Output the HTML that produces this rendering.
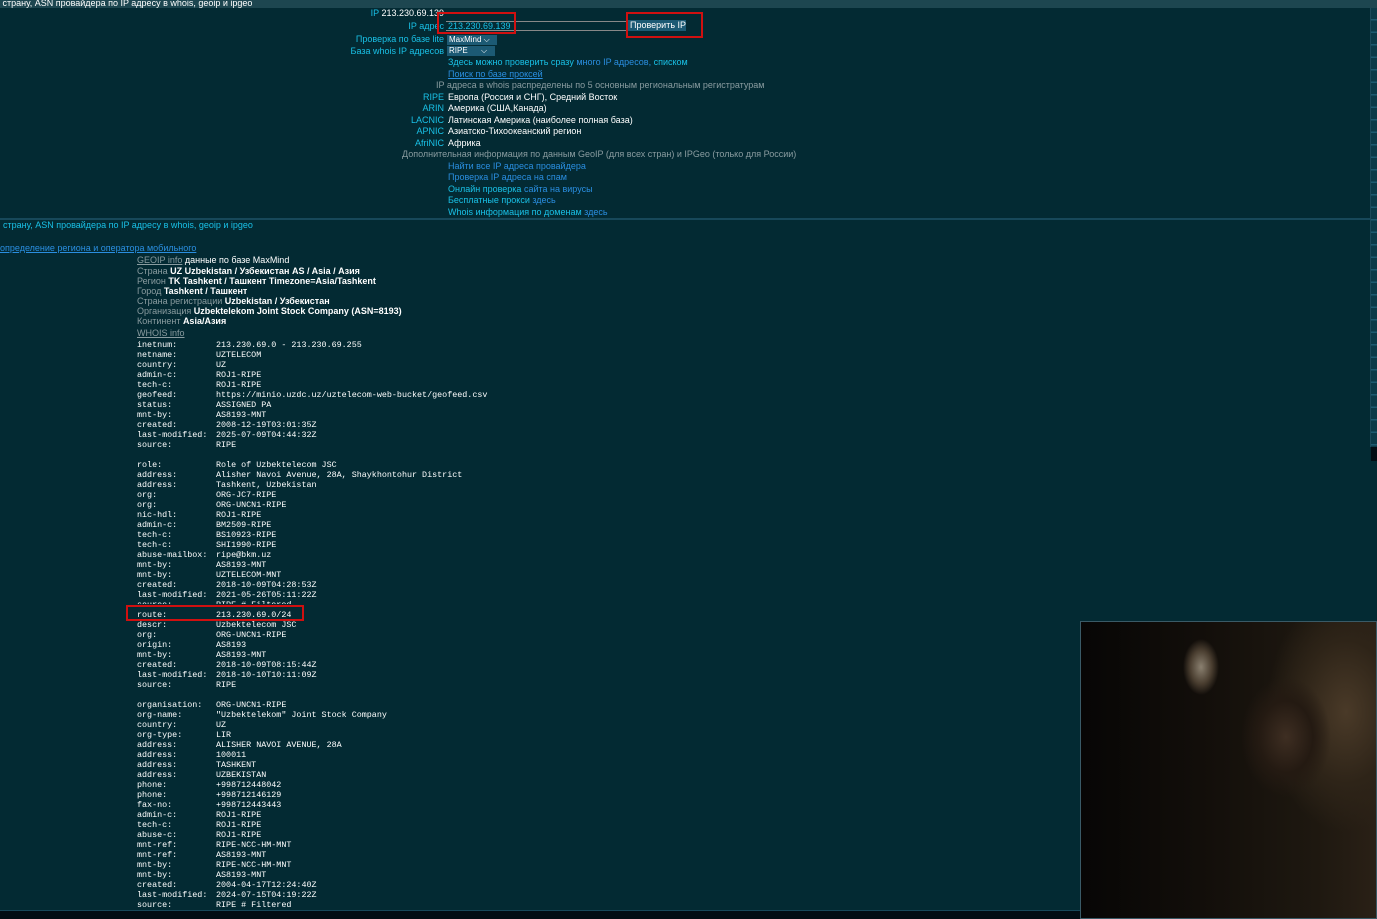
<!DOCTYPE html>
<html><head><meta charset="utf-8">
<style>
*{margin:0;padding:0;box-sizing:border-box}
html,body{width:1377px;height:919px;overflow:hidden;background:#032a33;font-family:"Liberation Sans",Arial,sans-serif;font-size:9px;color:#fff}
.a{position:absolute;white-space:nowrap;line-height:11px}
.r{text-align:right}
.c{color:#19c0e6}
.b{color:#2a8ee0}
.g{color:#8a9ca0}
.w{color:#fff}
u{text-decoration:underline}
.mono{position:absolute;left:137px;font-family:"Liberation Mono","DejaVu Sans Mono",monospace;font-size:8.4px;color:#fff;line-height:10px;white-space:nowrap}
.mono div{height:10px;white-space:pre}
.mono span{display:inline-block;width:79px}
.red{position:absolute;border:2px solid #d01010}
</style></head><body>
<div class="a" style="left:0;top:0;width:1377px;height:8px;background:#1d4650;line-height:6px;color:#fff;font-size:9px;overflow:hidden">&nbsp;страну, ASN провайдера по IP адресу в whois, geoip и ipgeo</div>

<div class="a c r" style="left:300px;width:144px;top:8px">IP <span class="w">213.230.69.139</span></div>
<div class="a c r" style="left:300px;width:144px;top:21px">IP адрес</div>
<div class="a" style="left:446px;top:21px;width:180px;height:10px;border-top:1px solid #888;border-bottom:1px solid #888;color:#19c0e6;line-height:9px;padding-left:2px">213.230.69.139</div>
<div class="a" style="left:628px;top:20px;width:58px;height:11px;background:#1c5a74;color:#fff;line-height:11px;padding-left:2px">Проверить IP</div>
<div class="red" style="left:437px;top:12px;width:79px;height:22px"></div>
<div class="red" style="left:626px;top:12px;width:77px;height:26px"></div>

<div class="a c r" style="left:300px;width:144px;top:34px">Проверка по базе lite</div>
<div class="a" style="left:447px;top:35px;width:50px;height:10px;background:#1c5a74;line-height:10px;padding-left:2px;font-size:8px">MaxMind ⌵</div>
<div class="a c r" style="left:300px;width:144px;top:46px">База whois IP адресов</div>
<div class="a" style="left:447px;top:46px;width:48px;height:10px;background:#1c5a74;line-height:10px;padding-left:2px;font-size:8px">RIPE &nbsp;&nbsp;&nbsp;&nbsp;&nbsp;⌵</div>

<div class="a b" style="left:448px;top:57px"><span class="c">Здесь можно проверить сразу</span> много IP адресов, <span class="c">списком</span></div>
<div class="a b" style="left:448px;top:69px"><u>Поиск по базе проксей</u></div>
<div class="a g" style="left:436px;top:80px">IP адреса в whois распределены по 5 основным региональным регистратурам</div>
<div class="a c r" style="left:300px;width:144px;top:92px">RIPE</div><div class="a w" style="left:448px;top:92px">Европа (Россия и СНГ), Средний Восток</div>
<div class="a c r" style="left:300px;width:144px;top:103px">ARIN</div><div class="a w" style="left:448px;top:103px">Америка (США,Канада)</div>
<div class="a c r" style="left:300px;width:144px;top:115px">LACNIC</div><div class="a w" style="left:448px;top:115px">Латинская Америка (наиболее полная база)</div>
<div class="a c r" style="left:300px;width:144px;top:126px">APNIC</div><div class="a w" style="left:448px;top:126px">Азиатско-Тихоокеанский регион</div>
<div class="a c r" style="left:300px;width:144px;top:138px">AfriNIC</div><div class="a w" style="left:448px;top:138px">Африка</div>
<div class="a g" style="left:402px;top:149px">Дополнительная информация по данным GeoIP (для всех стран) и IPGeo (только для России)</div>
<div class="a b" style="left:448px;top:161px">Найти все IP адреса провайдера</div>
<div class="a b" style="left:448px;top:172px">Проверка IP адреса на спам</div>
<div class="a b" style="left:448px;top:184px"><span class="c">Онлайн проверка</span> сайта на вирусы</div>
<div class="a b" style="left:448px;top:195px"><span class="c">Бесплатные прокси</span> здесь</div>
<div class="a b" style="left:448px;top:207px"><span class="c">Whois информация по доменам</span> здесь</div>

<div class="a" style="left:0;top:218px;width:1371px;height:2px;background:#17485a"></div>
<div class="a c" style="left:3px;top:220px">страну, ASN провайдера по IP адресу в whois, geoip и ipgeo</div>
<div class="a b" style="left:0;top:243px"><u>определение региона и оператора мобильного</u></div>

<div class="a g" style="left:137px;top:255px"><u>GEOIP info</u> <span class="w">данные по базе MaxMind</span></div>
<div class="a g" style="left:137px;top:266px">Страна <b class="w">UZ Uzbekistan / Узбекистан AS / Asia / Азия</b></div>
<div class="a g" style="left:137px;top:276px">Регион <b class="w">TK Tashkent / Ташкент Timezone=Asia/Tashkent</b></div>
<div class="a g" style="left:137px;top:286px">Город <b class="w">Tashkent / Ташкент</b></div>
<div class="a g" style="left:137px;top:296px">Страна регистрации <b class="w">Uzbekistan / Узбекистан</b></div>
<div class="a g" style="left:137px;top:306px">Организация <b class="w">Uzbektelekom Joint Stock Company (ASN=8193)</b></div>
<div class="a g" style="left:137px;top:316px">Континент <b class="w">Asia/Азия</b></div>
<div class="a g" style="left:137px;top:328px"><u>WHOIS info</u></div>

<div class="mono" style="top:340px"><div><span>inetnum:</span>213.230.69.0 - 213.230.69.255</div><div><span>netname:</span>UZTELECOM</div><div><span>country:</span>UZ</div><div><span>admin-c:</span>ROJ1-RIPE</div><div><span>tech-c:</span>ROJ1-RIPE</div><div><span>geofeed:</span>https://minio.uzdc.uz/uztelecom-web-bucket/geofeed.csv</div><div><span>status:</span>ASSIGNED PA</div><div><span>mnt-by:</span>AS8193-MNT</div><div><span>created:</span>2008-12-19T03:01:35Z</div><div><span>last-modified:</span>2025-07-09T04:44:32Z</div><div><span>source:</span>RIPE</div><div></div><div><span>role:</span>Role of Uzbektelecom JSC</div><div><span>address:</span>Alisher Navoi Avenue, 28A, Shaykhontohur District</div><div><span>address:</span>Tashkent, Uzbekistan</div><div><span>org:</span>ORG-JC7-RIPE</div><div><span>org:</span>ORG-UNCN1-RIPE</div><div><span>nic-hdl:</span>ROJ1-RIPE</div><div><span>admin-c:</span>BM2509-RIPE</div><div><span>tech-c:</span>BS10923-RIPE</div><div><span>tech-c:</span>SHI1990-RIPE</div><div><span>abuse-mailbox:</span>ripe@bkm.uz</div><div><span>mnt-by:</span>AS8193-MNT</div><div><span>mnt-by:</span>UZTELECOM-MNT</div><div><span>created:</span>2018-10-09T04:28:53Z</div><div><span>last-modified:</span>2021-05-26T05:11:22Z</div><div><span>source:</span>RIPE # Filtered</div><div><span>route:</span>213.230.69.0/24</div><div><span>descr:</span>Uzbektelecom JSC</div><div><span>org:</span>ORG-UNCN1-RIPE</div><div><span>origin:</span>AS8193</div><div><span>mnt-by:</span>AS8193-MNT</div><div><span>created:</span>2018-10-09T08:15:44Z</div><div><span>last-modified:</span>2018-10-10T10:11:09Z</div><div><span>source:</span>RIPE</div><div></div><div><span>organisation:</span>ORG-UNCN1-RIPE</div><div><span>org-name:</span>"Uzbektelekom" Joint Stock Company</div><div><span>country:</span>UZ</div><div><span>org-type:</span>LIR</div><div><span>address:</span>ALISHER NAVOI AVENUE, 28A</div><div><span>address:</span>100011</div><div><span>address:</span>TASHKENT</div><div><span>address:</span>UZBEKISTAN</div><div><span>phone:</span>+998712448042</div><div><span>phone:</span>+998712146129</div><div><span>fax-no:</span>+998712443443</div><div><span>admin-c:</span>ROJ1-RIPE</div><div><span>tech-c:</span>ROJ1-RIPE</div><div><span>abuse-c:</span>ROJ1-RIPE</div><div><span>mnt-ref:</span>RIPE-NCC-HM-MNT</div><div><span>mnt-ref:</span>AS8193-MNT</div><div><span>mnt-by:</span>RIPE-NCC-HM-MNT</div><div><span>mnt-by:</span>AS8193-MNT</div><div><span>created:</span>2004-04-17T12:24:40Z</div><div><span>last-modified:</span>2024-07-15T04:19:22Z</div><div><span>source:</span>RIPE # Filtered</div></div>
<div class="a" style="left:126px;top:604px;width:180px;height:5px;background:#032a33"></div>
<div class="red" style="left:126px;top:605px;width:178px;height:16px"></div>

<div class="a" style="left:0;top:910px;width:1377px;height:1px;background:#17485a"></div>
<div class="a" style="left:0;top:911px;width:1080px;height:8px;background:#020d14"></div>

<div class="a" style="left:1370px;top:8px;width:1px;height:439px;background:#1b4a5a"></div>
<div class="a" style="left:1371px;top:8px;width:6px;height:439px;background:repeating-linear-gradient(#0b3a48 0,#0b3a48 11px,#1d5a70 11px,#1d5a70 12.5px)"></div>
<div class="a" style="left:1371px;top:447px;width:6px;height:14px;background:#020d14"></div>

<div class="a" style="left:1080px;top:621px;width:297px;height:298px;border:1px solid #3a5a66;background:
radial-gradient(ellipse 18px 28px at 120px 45px,#8a8070 0,#4a3e30 60%,transparent 100%),
radial-gradient(ellipse 45px 60px at 205px 115px,#3e2e22 0,#241a12 60%,transparent 100%),
radial-gradient(ellipse 80px 120px at 265px 90px,#4a3a28 0,#2e2418 60%,transparent 100%),
linear-gradient(90deg,#070605 0,#120e0a 40%,#1e1810 80%,#2a2016 100%)"></div>
</body></html>
